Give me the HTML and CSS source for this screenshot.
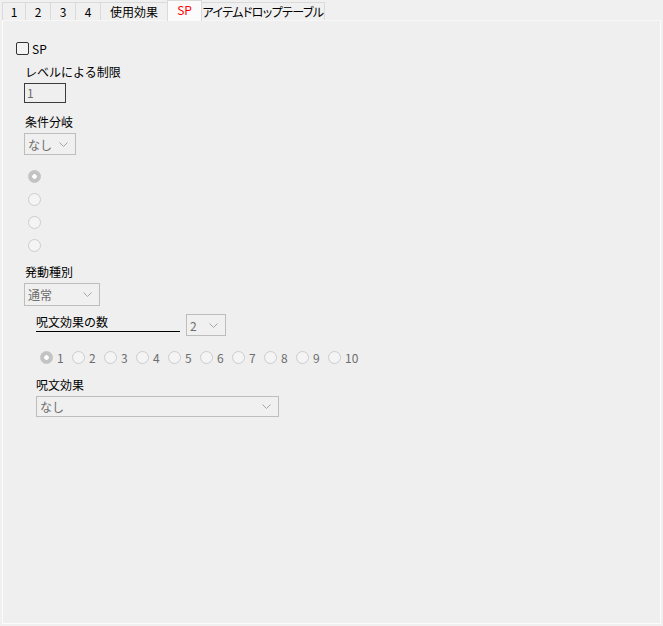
FILE: index.html
```html
<!DOCTYPE html>
<html lang="ja">
<head>
  <meta charset="UTF-8">
  <title>SP</title>
  <link rel="stylesheet" href="styles.css">
</head>
<body>
  <div class="window">
    <div class="tabs">
      <div class="tab w-num">1</div>
      <div class="tab w-num2">2</div>
      <div class="tab w-num2">3</div>
      <div class="tab w-num2">4</div>
      <div class="tab w-use">使用効果</div>
      <div class="tab active">SP</div>
      <div class="tab w-drop">アイテムドロップテーブル</div>
    </div>

    <div class="panel">
      <div class="check-row">
        <span class="checkbox"></span>
        <span>SP</span>
      </div>

      <div class="label lbl-level">レベルによる制限</div>
      <div class="textbox">1</div>

      <div class="label lbl-gap">条件分岐</div>
      <div class="combo combo-cond">
        <span>なし</span>
        <svg width="9" height="5" viewBox="0 0 9 5"><polyline points="0.5,0.5 4.5,4.5 8.5,0.5" fill="none" stroke="#a6a6a6" stroke-width="1"/></svg>
      </div>

      <div class="radios">
        <span class="radio on"></span>
        <span class="radio"></span>
        <span class="radio"></span>
        <span class="radio"></span>
      </div>

      <div class="label lbl-kind">発動種別</div>
      <div class="combo combo-kind">
        <span>通常</span>
        <svg width="9" height="5" viewBox="0 0 9 5"><polyline points="0.5,0.5 4.5,4.5 8.5,0.5" fill="none" stroke="#a6a6a6" stroke-width="1"/></svg>
      </div>

      <div class="group">
        <div class="count-row">
          <div class="count-label">呪文効果の数</div>
          <div class="combo combo-count">
            <span>2</span>
            <svg width="9" height="5" viewBox="0 0 9 5"><polyline points="0.5,0.5 4.5,4.5 8.5,0.5" fill="none" stroke="#a6a6a6" stroke-width="1"/></svg>
          </div>
        </div>

        <div class="num-radios">
          <div class="num"><span class="radio on"></span>1</div>
          <div class="num"><span class="radio"></span>2</div>
          <div class="num"><span class="radio"></span>3</div>
          <div class="num"><span class="radio"></span>4</div>
          <div class="num"><span class="radio"></span>5</div>
          <div class="num"><span class="radio"></span>6</div>
          <div class="num"><span class="radio"></span>7</div>
          <div class="num"><span class="radio"></span>8</div>
          <div class="num"><span class="radio"></span>9</div>
          <div class="num"><span class="radio"></span>10</div>
        </div>

        <div class="label lbl-effect">呪文効果</div>
        <div class="combo combo-effect">
          <span>なし</span>
          <svg width="9" height="5" viewBox="0 0 9 5"><polyline points="0.5,0.5 4.5,4.5 8.5,0.5" fill="none" stroke="#a6a6a6" stroke-width="1"/></svg>
        </div>
      </div>
    </div>
  </div>
</body>
</html>
```

FILE: styles.css
```css
body {
  margin: 0;
  background: #f0f0f0;
  font-family: "Noto Sans CJK JP", "Noto Sans", sans-serif;
  font-size: 12px;
  color: #000;
}
.window {
  width: 663px;
  height: 626px;
  display: flex;
  flex-direction: column;
}
.tabs {
  display: flex;
  align-items: flex-end;
  height: 20px;
  padding-left: 2px;
}
.tab {
  height: 17px;
  line-height: 18px;
  border: 1px solid #dadada;
  border-bottom: none;
  background: #f0f0f0;
  text-align: center;
  white-space: nowrap;
  box-sizing: content-box;
  margin-right: -1px;
}
.w-num { width: 22px; }
.w-num2 { width: 24px; }
.w-use { width: 66px; }
.w-drop {
  width: 122px;
  font-feature-settings: "palt";
  letter-spacing: -0.6px;
}
.tab.active {
  width: 33px;
  height: 20px;
  line-height: 18px;
  background: #fbfbfb;
  color: #ff0000;
  position: relative;
  z-index: 1;
  margin-bottom: -1px;
}
.panel {
  margin-left: 2px;
  width: 657px;
  height: 602px;
  border: 1px solid #fcfcfc;
  border-top-color: #f7f7f7;
  background: #efefef;
  display: flex;
  flex-direction: column;
  align-items: flex-start;
}
.check-row {
  display: flex;
  align-items: center;
  gap: 3px;
  margin: 21px 0 0 13px;
  height: 13px;
  line-height: 13px;
}
.checkbox {
  width: 11px;
  height: 11px;
  border: 1px solid #333;
  border-radius: 2px;
  background: #f4f4f4;
}
.label {
  height: 14px;
  line-height: 14px;
  margin-left: 22px;
}
.lbl-level { margin-top: 10px; }
.lbl-gap { margin-top: 12px; }
.lbl-kind { margin-top: 13px; }
.textbox {
  margin: 4px 0 0 21px;
  width: 38px;
  height: 18px;
  line-height: 18px;
  border: 1px solid #3c3c3c;
  padding-left: 2px;
  color: #6d6d6d;
}
.combo {
  display: flex;
  align-items: center;
  justify-content: space-between;
  border: 1px solid #bdbdbd;
  background: #f0f0f0;
  color: #6d6d6d;
  padding: 0 7px 0 3px;
}
.combo-cond {
  margin: 4px 0 0 21px;
  width: 40px;
  height: 20px;
}
.combo-kind {
  margin: 4px 0 0 21px;
  width: 64px;
  height: 21px;
}
.radios {
  display: flex;
  flex-direction: column;
  gap: 10px;
  margin: 15px 0 0 25px;
}
.radio {
  width: 11px;
  height: 11px;
  border-radius: 50%;
  border: 1px solid #cdcdcd;
  background: #f4f4f4;
  display: inline-block;
  box-sizing: content-box;
}
.radio.on {
  background: radial-gradient(circle, #ffffff 0 2px, #c3c3c3 2.5px);
  border-color: #c3c3c3;
}
.group {
  margin-left: 33px;
  display: flex;
  flex-direction: column;
  align-items: flex-start;
}
.count-row {
  display: flex;
  align-items: flex-start;
  margin-top: 8px;
  gap: 6px;
}
.count-label {
  width: 144px;
  height: 17px;
  line-height: 16px;
  border-bottom: 1px solid #000;
}
.combo-count {
  width: 28px;
  height: 20px;
  padding: 0 7px 0 3px;
}
.num-radios {
  display: flex;
  margin: 15px 0 0 4px;
  height: 13px;
}
.num {
  width: 32px;
  display: flex;
  align-items: center;
  gap: 4px;
  color: #6d6d6d;
  line-height: 13px;
}
.lbl-effect {
  margin: 14px 0 0 0;
}
.combo-effect {
  margin-top: 4px;
  width: 231px;
  height: 19px;
}
```
